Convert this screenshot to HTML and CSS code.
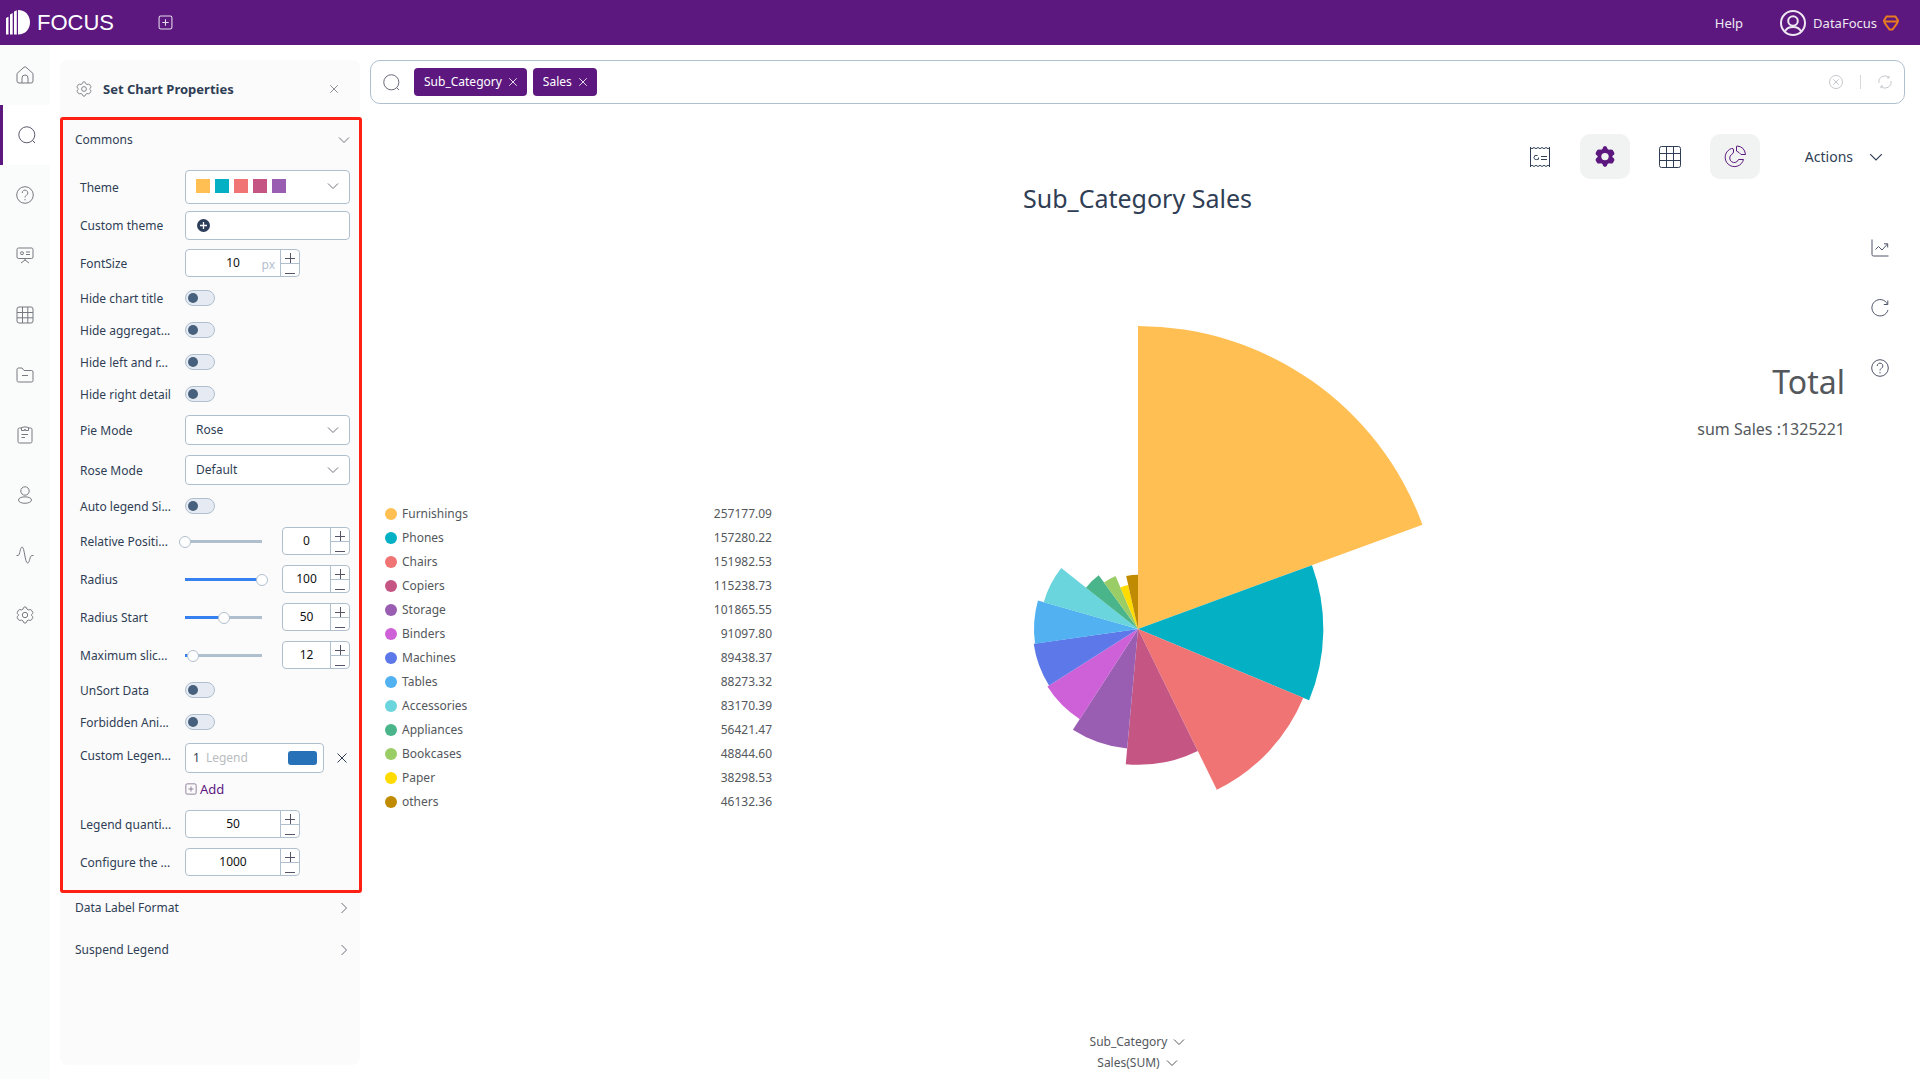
FILE: index.html
```html
<!DOCTYPE html>
<html lang="en">
<head>
<meta charset="utf-8">
<meta name="viewport" content="width=device-width, initial-scale=1">
<title>DataFocus</title>
<link rel="stylesheet" href="styles.css">
</head>
<body>
<svg class="sprite" aria-hidden="true">
  <symbol id="i-down" viewBox="0 0 12 12"><path d="M1 3.500L6 8.500L11 3.500"/></symbol>
  <symbol id="i-right" viewBox="0 0 12 12"><path d="M3.500 1L8.500 6L3.500 11"/></symbol>
  <symbol id="i-x" viewBox="0 0 12 12"><path d="M1.500 1.500L10.500 10.500M10.500 1.500L1.500 10.500"/></symbol>
  <symbol id="i-plus" viewBox="0 0 12 12"><path d="M6.500 2V12M1 7.500H11"/></symbol>
  <symbol id="i-minus" viewBox="0 0 12 12"><path d="M1 9.500H11"/></symbol>
  <symbol id="i-plusbox" viewBox="0 0 14 14"><rect x="1" y="1" width="12" height="12" rx="1.500"/><path d="M7 4V10M4 7H10"/></symbol>
  <symbol id="i-search" viewBox="0 0 18 18"><circle cx="8.800" cy="8.800" r="8"/><path d="M14.500 14.500L17 17"/></symbol>
  <symbol id="i-help" viewBox="0 0 18 18"><circle cx="9" cy="9" r="8.300"/><path d="M6.200 7a2.800 2.800 0 1 1 4.300 2.300C9.500 10 9 10.300 9 11.500M9 13v1.300"/></symbol>
  <symbol id="i-grid" viewBox="0 0 18 18"><rect x="1" y="1" width="16" height="16" rx="2"/><path d="M1 6.500H17M1 11.800H17M6.500 1V17M11.800 1V17"/></symbol>
  <symbol id="i-gear" viewBox="0 0 18 18"><path d="M9 .8q1.500 0 2 2.300l1.300.8q2.400-.8 3.200.3l1.300 2.300q.4 1.100-1.600 2.500 2 1.500 1.600 2.600l-1.300 2.200q-.8 1.100-3.200.3l-1.300.8q-.5 2.300-2 2.300t-2-2.300l-1.300-.8q-2.400.8-3.200-.3l-1.300-2.200Q.8 10.500 2.800 9 .8 7.600 1.200 6.500l1.300-2.300q.8-1.100 3.200-.3L7 3.100Q7.500.8 9 .8z"/><circle cx="9" cy="9" r="2.700"/></symbol>
</svg>

<header class="topbar">
  <a class="brand" href="#">
    <svg width="24" height="25" viewBox="0 0 24 25" aria-hidden="true"><path fill="currentColor" d="M0 8l2.500-1.200V24.500H0zM4 4.500l2.700-1.500V24.500H4zM8 1.500l2.800-1.200V24.500H8zM12 0c7.500 0 12 5.500 12 12.300S19.500 24.500 12 24.500z"/></svg>
    <span>FOCUS</span>
  </a>
  <button class="icon-btn new-tab" aria-label="New"><svg class="ico" width="15" height="15"><use href="#i-plusbox"/></svg></button>
  <nav class="account">
    <a href="#">Help</a>
    <a class="user" href="#">
      <svg class="ico thick" width="26" height="26" viewBox="0 0 26 26" aria-hidden="true"><circle cx="13" cy="13" r="12"/><circle cx="13" cy="11" r="4.800"/><path d="M5 21.500c1.500-3.800 4-4.500 8-4.500s6.500.7 8 4.500"/></svg>
      <span>DataFocus</span>
      <svg class="ico gem" width="16" height="16" viewBox="0 0 16 16" aria-hidden="true"><path d="M3.500 1.500h9L15 5.500c0 3-4 6.500-5.500 9h-3C5 12 1 8.500 1 5.500zM1.500 6.500H14.500"/></svg>
    </a>
  </nav>
</header>

<div class="shell">
  <nav class="rail" aria-label="Sections">
    <a href="#" aria-label="Home"><svg class="ico" width="18" height="18" viewBox="0 0 18 18"><path d="M1 7.500L8 1.200q1-.8 2 0L17 7.500V15q0 2-2 2H3q-2 0-2-2zM6 17V12a3 3 0 0 1 6 0V17"/></svg></a>
    <a class="active" href="#" aria-label="Search"><svg class="ico" width="18" height="18"><use href="#i-search"/></svg></a>
    <a href="#" aria-label="Help"><svg class="ico" width="18" height="18"><use href="#i-help"/></svg></a>
    <a href="#" aria-label="Boards"><svg class="ico" width="18" height="18" viewBox="0 0 18 18"><rect x="1" y="2" width="16" height="10.500" rx="1.500"/><circle cx="6" cy="7.200" r="1.500"/><path d="M10 6H14M10 8.500H14M9 12.500V14M5 17l4-3 4 3"/></svg></a>
    <a href="#" aria-label="Tables"><svg class="ico" width="18" height="18"><use href="#i-grid"/></svg></a>
    <a href="#" aria-label="Files"><svg class="ico" width="18" height="18" viewBox="0 0 18 18"><path d="M1 3.500q0-1.500 1.500-1.500H6l2 2.500h7.500q1.500 0 1.500 1.500v8.500q0 1.500-1.500 1.500h-13Q1 16 1 14.500zM6 9.500H12"/></svg></a>
    <a href="#" aria-label="Tasks"><svg class="ico" width="18" height="18" viewBox="0 0 18 18"><path d="M5.500 2H3.500Q2 2 2 3.500v12Q2 17 3.500 17h11q1.500 0 1.500-1.500v-12Q16 2 14.500 2h-2M5.500 1.500V4.500H8.500L9 3L9.500 4.500H12.500V1.500Q9 .2 5.500 1.500zM5.500 8.500H12M5.500 11.500H9"/></svg></a>
    <a href="#" aria-label="Users"><svg class="ico" width="18" height="18" viewBox="0 0 18 18"><circle cx="9" cy="5" r="4.200"/><path d="M2.500 14C2.500 9.800 15.500 9.800 15.500 14S2.500 18.500 2.500 14z"/></svg></a>
    <a href="#" aria-label="Activity"><svg class="ico" width="18" height="18" viewBox="0 0 18 18"><path d="M.5 9.500H2c2 0 2-8.500 4.200-8.500S9 17 11.500 17s2-7.500 4.500-7.500h1.500"/></svg></a>
    <a href="#" aria-label="Settings"><svg class="ico" width="18" height="18"><use href="#i-gear"/></svg></a>
  </nav>

  <aside class="panel">
    <div class="panel-head">
      <svg class="ico" width="16" height="16"><use href="#i-gear"/></svg>
      <h2>Set Chart Properties</h2>
      <button class="icon-btn" aria-label="Close"><svg class="ico" width="10" height="10"><use href="#i-x"/></svg></button>
    </div>

    <section class="commons">
      <button class="section-head first">Commons<svg class="ico" width="12" height="12"><use href="#i-down"/></svg></button>
      <div class="rows">
        <div class="row tall"><span class="label" id="l-theme">Theme</span>
          <button class="box theme" aria-labelledby="l-theme" aria-haspopup="listbox"><i class="sw c1"></i><i class="sw c2"></i><i class="sw c3"></i><i class="sw c4"></i><i class="sw c5"></i><svg class="ico" width="12" height="12"><use href="#i-down"/></svg></button></div>
        <div class="row custom"><span class="label" id="l-custom">Custom theme</span>
          <button class="box add-theme" aria-labelledby="l-custom"><svg width="13" height="13" viewBox="0 0 13 13"><circle cx="6.500" cy="6.500" r="6.500" fill="#2c3e5a"/><path d="M6.500 3V10M3 6.500H10" stroke="#fff" stroke-width="1.300"/></svg></button></div>
        <div class="row num"><label class="label" for="fs">FontSize</label>
          <div class="stepper wide"><input id="fs" type="number" value="10"><span class="unit">px</span><div class="steps"><button aria-label="Increase"><svg class="ico" width="12" height="12"><use href="#i-plus"/></svg></button><button aria-label="Decrease"><svg class="ico" width="12" height="12"><use href="#i-minus"/></svg></button></div></div></div>
        <div class="row"><label class="label" for="t1">Hide chart title</label><input class="switch" id="t1" type="checkbox" role="switch"></div>
        <div class="row"><label class="label" for="t2">Hide aggregat...</label><input class="switch" id="t2" type="checkbox" role="switch"></div>
        <div class="row"><label class="label" for="t3">Hide left and r...</label><input class="switch" id="t3" type="checkbox" role="switch"></div>
        <div class="row"><label class="label" for="t4">Hide right detail</label><input class="switch" id="t4" type="checkbox" role="switch"></div>
        <div class="row tall"><label class="label" for="pm">Pie Mode</label>
          <div class="select"><select class="box" id="pm"><option>Rose</option></select><svg class="ico" width="12" height="12"><use href="#i-down"/></svg></div></div>
        <div class="row tall"><label class="label" for="rm">Rose Mode</label>
          <div class="select"><select class="box" id="rm"><option>Default</option></select><svg class="ico" width="12" height="12"><use href="#i-down"/></svg></div></div>
        <div class="row"><label class="label" for="t5">Auto legend Si...</label><input class="switch" id="t5" type="checkbox" role="switch"></div>
        <div class="row num"><label class="label" for="n1">Relative Positi...</label><input class="slider" type="range" value="0" aria-label="Relative Positi..." style="--fill:0%">
          <div class="stepper"><input id="n1" type="number" value="0"><div class="steps"><button aria-label="Increase"><svg class="ico" width="12" height="12"><use href="#i-plus"/></svg></button><button aria-label="Decrease"><svg class="ico" width="12" height="12"><use href="#i-minus"/></svg></button></div></div></div>
        <div class="row num"><label class="label" for="n2">Radius</label><input class="slider" type="range" value="100" aria-label="Radius" style="--fill:100%">
          <div class="stepper"><input id="n2" type="number" value="100"><div class="steps"><button aria-label="Increase"><svg class="ico" width="12" height="12"><use href="#i-plus"/></svg></button><button aria-label="Decrease"><svg class="ico" width="12" height="12"><use href="#i-minus"/></svg></button></div></div></div>
        <div class="row num"><label class="label" for="n3">Radius Start</label><input class="slider" type="range" value="50" aria-label="Radius Start" style="--fill:50%">
          <div class="stepper"><input id="n3" type="number" value="50"><div class="steps"><button aria-label="Increase"><svg class="ico" width="12" height="12"><use href="#i-plus"/></svg></button><button aria-label="Decrease"><svg class="ico" width="12" height="12"><use href="#i-minus"/></svg></button></div></div></div>
        <div class="row num"><label class="label" for="n4">Maximum slic...</label><input class="slider" type="range" min="2" value="12" aria-label="Maximum slic..." style="--fill:10%">
          <div class="stepper"><input id="n4" type="number" value="12"><div class="steps"><button aria-label="Increase"><svg class="ico" width="12" height="12"><use href="#i-plus"/></svg></button><button aria-label="Decrease"><svg class="ico" width="12" height="12"><use href="#i-minus"/></svg></button></div></div></div>
        <div class="row"><label class="label" for="t6">UnSort Data</label><input class="switch" id="t6" type="checkbox" role="switch"></div>
        <div class="row"><label class="label" for="t7">Forbidden Ani...</label><input class="switch" id="t7" type="checkbox" role="switch"></div>
        <div class="row tall legend-row"><label class="label" for="lg">Custom Legen...</label>
          <div class="box legend-edit"><span>1</span><input id="lg" type="text" placeholder="Legend"><button class="color" aria-label="Color"></button></div>
          <button class="icon-btn remove" aria-label="Remove"><svg class="ico" width="12" height="12"><use href="#i-x"/></svg></button></div>
        <div class="row add"><span class="label"></span><button class="add-btn"><svg class="ico" width="12" height="12"><use href="#i-plusbox"/></svg>Add</button></div>
        <div class="row num"><label class="label" for="n5">Legend quanti...</label>
          <div class="stepper wide"><input id="n5" type="number" value="50"><div class="steps"><button aria-label="Increase"><svg class="ico" width="12" height="12"><use href="#i-plus"/></svg></button><button aria-label="Decrease"><svg class="ico" width="12" height="12"><use href="#i-minus"/></svg></button></div></div></div>
        <div class="row num"><label class="label" for="n6">Configure the ...</label>
          <div class="stepper wide"><input id="n6" type="number" value="1000"><div class="steps"><button aria-label="Increase"><svg class="ico" width="12" height="12"><use href="#i-plus"/></svg></button><button aria-label="Decrease"><svg class="ico" width="12" height="12"><use href="#i-minus"/></svg></button></div></div></div>
      </div>
    </section>
    <div class="more">
      <button class="section-head">Data Label Format<svg class="ico" width="12" height="12"><use href="#i-right"/></svg></button>
      <button class="section-head">Suspend Legend<svg class="ico" width="12" height="12"><use href="#i-right"/></svg></button>
    </div>
  </aside>

  <main class="main">
    <div class="search">
      <svg class="ico" width="17" height="17"><use href="#i-search"/></svg>
      <div class="tags">
        <span class="tag">Sub_Category<button class="icon-btn" aria-label="Remove Sub_Category"><svg class="ico" width="10" height="10"><use href="#i-x"/></svg></button></span>
        <span class="tag">Sales<button class="icon-btn" aria-label="Remove Sales"><svg class="ico" width="10" height="10"><use href="#i-x"/></svg></button></span>
      </div>
      <input class="query" type="text" aria-label="Search">
      <div class="search-end">
        <button class="icon-btn" aria-label="Clear"><svg class="ico" width="14" height="14" viewBox="0 0 14 14"><circle cx="7" cy="7" r="6.500"/><path d="M4.300 4.300L9.700 9.700M9.700 4.300L4.300 9.700"/></svg></button>
        <span class="divider"></span>
        <button class="icon-btn" aria-label="Refresh"><svg class="ico" width="14" height="14" viewBox="0 0 14 14"><path d="M1 8A6 6 0 0 1 11 2.500M13 6A6 6 0 0 1 3 11.500M11 .8V3H9M3 13.200V11H5"/></svg></button>
      </div>
    </div>

    <div class="toolbar">
      <button class="tool" aria-label="Query"><svg class="ico" width="22" height="22" viewBox="0 0 22 22"><path d="M1.500 1V21M20.500 1V21M1 1.500l2 1.200 2-1.200 2 1.200 2-1.200 2 1.200 2-1.200 2 1.200 2-1.200 2 1.200 2-1.200M1 20.500l2-1.200 2 1.200 2-1.200 2 1.200 2-1.200 2 1.200 2-1.200 2 1.200 2-1.200 2 1.200M8.500 9.500Q5 8.500 5 11.500T9.500 13.200V11.500M12 10.500H18M12 13.500H18"/></svg></button>
      <button class="tool on" aria-label="Chart properties"><svg width="20" height="21" viewBox="0 0 20 21"><path fill="#5c187f" fill-rule="evenodd" d="M10 0q2 0 2.600 3l1.300.8q3-1 4 .5l1.500 2.600q.5 1.200-2 3.200v1q2.500 2 2 3.200l-1.500 2.600q-1 1.200-4 .3l-1.300.8Q12 21 10 21t-2.600-3l-1.300-.8q-3 .9-4-.3L.6 14.300q-.5-1.200 2-3.200v-1q-2.500-2-2-3.200l1.500-2.600q1-1.500 4-.5L7.400 3Q8 0 10 0zM10 6.900a3.700 3.700 0 1 0 0 7.400 3.700 3.700 0 0 0 0-7.400z"/></svg></button>
      <button class="tool" aria-label="Table"><svg class="ico" width="22" height="22" viewBox="0 0 22 22"><rect x=".5" y=".5" width="21" height="21" rx="2"/><path d="M.5 7.500H21.500M.5 14.500H21.500M7.500 .5V21.500M14.500 .5V21.500"/></svg></button>
      <button class="tool on" aria-label="Chart"><svg class="ico pie-ico" width="23" height="23" viewBox="0 0 23 23"><path d="M8.500 3.500A9.300 9.300 0 1 0 20.500 14.500H15.500A4.500 4.500 0 1 1 8.500 9.500Q10.500 8.500 10.500 7V5Q10.500 3 8.500 3.500zM14 1Q21.500 1.500 22.500 9.500L18 9.500Q16.500 7.500 13.500 6V1.500Q13.500 1 14 1z"/></svg></button>
      <button class="actions">Actions<svg class="ico" width="14" height="14"><use href="#i-down"/></svg></button>
    </div>

    <h1>Sub_Category Sales</h1>
    <div class="stage">
      <table class="legend" aria-label="Sales by Sub_Category"><tbody id="legend"></tbody></table>
      <svg id="rose" class="rose" viewBox="-304 -304 608 608" role="img" aria-label="Sub_Category Sales"></svg>
      <div class="side">
        <div class="totals"><strong>Total</strong><span>sum Sales :1325221</span></div>
        <div class="side-tools">
          <button class="icon-btn" aria-label="Trend"><svg class="ico" width="18" height="18" viewBox="0 0 18 18"><path d="M1 .5V15.500Q1 17 2.500 17H17.500M4.500 10.500L7.500 7.500L11 11L16.500 5M13 4.800H16.700V8.500"/></svg></button>
          <button class="icon-btn" aria-label="Reload"><svg class="ico" width="18" height="18" viewBox="0 0 18 18"><path d="M16.500 5.200A8.200 8.200 0 1 0 17 11M16.800 1.500V5.500H12.800"/></svg></button>
          <button class="icon-btn" aria-label="Help"><svg class="ico" width="18" height="18"><use href="#i-help"/></svg></button>
        </div>
      </div>
    </div>
    <div class="axes">
      <button>Sub_Category<svg class="ico" width="12" height="12"><use href="#i-down"/></svg></button>
      <button>Sales(SUM)<svg class="ico" width="12" height="12"><use href="#i-down"/></svg></button>
    </div>
  </main>
</div>
<script src="chart.js"></script>
</body>
</html>
```
FILE: styles.css
```css
* { box-sizing: border-box; }
body {
  margin: 0;
  min-height: 100vh;
  display: flex;
  flex-direction: column;
  background: #fff;
  color: #2f3e55;
  font: 12px/18px "Noto Sans", "Open Sans", sans-serif;
}
button, input, select { font: inherit; color: inherit; margin: 0; }
button { padding: 0; border: 0; background: none; cursor: pointer; }
a { color: inherit; text-decoration: none; }
.sprite { position: absolute; width: 0; height: 0; }
.ico { fill: none; stroke: currentColor; stroke-width: 1; flex: none; display: block; }
.thick { stroke-width: 2; }
.icon-btn { display: flex; align-items: center; justify-content: center; }

/* top bar */
.topbar { display: flex; align-items: center; height: 45px; padding: 0 21px 0 6px; background: #5c187f; color: #fff; }
.brand { display: flex; align-items: center; gap: 7px; font: 22px/25px "Liberation Sans", Arial, sans-serif; }
.new-tab { margin-left: 44px; color: #e6dbec; }
.account { display: flex; align-items: center; gap: 37px; margin-left: auto; font-size: 13px; color: #efe8f2; }
.user { display: flex; align-items: center; gap: 6px; }
.user span { margin-left: 1px; }
.gem { color: #e87b22; stroke-width: 2; }

.shell { display: flex; flex: 1; }

/* left rail */
.rail { width: 50px; flex: none; background: #fafcfb; color: #777a80; }
.rail a { display: flex; align-items: center; justify-content: center; height: 60px; }
.rail .active { background: #fff; border-left: 3px solid #5c187f; color: #5e5670; }

/* property panel */
.panel { width: 300px; flex: none; margin: 15px 10px 14px; border-radius: 8px; background: #fbfbfb; }
.panel-head { display: flex; align-items: center; height: 57px; padding: 0 21px 0 16px; color: #777a80; }
.panel-head h2 { flex: 1; margin: 0 0 0 11px; font-size: 13px; color: #2f3e55; }
.commons { margin-right: -2px; border: 3px solid #fe2012; border-radius: 3px; }
.section-head { display: flex; align-items: center; justify-content: space-between; width: 100%; height: 30px; padding: 0 10px 0 15px; }
.section-head .ico { color: #6f7280; }
.section-head.first { height: 40px; padding: 0 9px 0 12px; }
.more { display: grid; gap: 12px; }
.rows { padding: 7px 9px 9px 17px; }
.row { display: flex; align-items: center; height: 32px; }
.row.tall { height: 40px; }
.row.custom { height: 37px; }
.row.num { height: 38px; }
.row.add { height: 27px; padding-bottom: 5px; }
.label { width: 95px; margin-right: 10px; padding-top: 1px; flex: none; white-space: nowrap; }
.legend-row .label { padding: 0 0 5px; }
.box { border: 1px solid #b0bfce; border-radius: 4px; background: #fff; }
.theme { display: flex; align-items: center; flex: 1; gap: 5px; height: 34px; padding: 0 10px 2px; }
.theme .ico { margin-left: auto; }
.sw { width: 14px; height: 14px; }
.c1 { background: #ffbf53; }
.c2 { background: #04b0c3; }
.c3 { background: #f07474; }
.c4 { background: #c55583; }
.c5 { background: #995eb2; }
.add-theme { display: flex; align-items: center; flex: 1; height: 29px; padding: 0 11px; }
.select { position: relative; flex: 1; }
.select select { display: block; width: 100%; height: 30px; padding: 0 10px; appearance: none; outline: 0; }
.select .ico { position: absolute; right: 11px; top: 9px; pointer-events: none; }
.select .ico, .theme .ico { color: #6f7280; }

.switch { appearance: none; display: flex; align-items: center; width: 30px; height: 16px; padding: 0 2px; border: 1px solid #b0bfce; border-radius: 8px; background: #e6ebf3; }
.switch::before { content: ""; width: 10px; height: 10px; border-radius: 5px; background: #47607d; }
.switch:checked { justify-content: flex-end; }

.stepper { position: relative; display: flex; width: 68px; height: 28px; margin-left: auto; border: 1px solid #b0bfce; border-radius: 4px; background: #fff; }
.stepper.wide { width: 115px; margin-left: 0; }
.stepper input { flex: 1; min-width: 0; padding: 0; border: 0; background: none; text-align: center; color: #111; appearance: textfield; outline: 0; }
.stepper input::-webkit-inner-spin-button { display: none; }
.unit { position: absolute; right: 24px; top: 6px; color: #b4c0cf; }
.steps { display: grid; grid-template-rows: 1fr 1fr; width: 19px; border-left: 1px solid #b0bfce; }
.steps button { display: flex; align-items: center; justify-content: center; overflow: hidden; color: #555566; }
.steps button + button { border-top: 1px solid #b0bfce; }

.slider { width: 89px; height: 12px; margin: 0 -6px; appearance: none; background: none; outline: 0; }
.slider::-webkit-slider-runnable-track { height: 3px; background: linear-gradient(to right, #3680f0 var(--fill), #b0bfce 0) 6px 0 / 77px 3px no-repeat; }
.slider::-webkit-slider-thumb { appearance: none; width: 12px; height: 12px; margin-top: -4px; border: 1px solid #b0bfce; border-radius: 6px; background: #fff; }

.legend-edit { display: flex; align-items: center; gap: 6px; width: 139px; height: 30px; padding: 0 6px 0 7px; }
.legend-edit input { flex: 1; min-width: 0; padding: 0; border: 0; outline: 0; }
.legend-edit input::placeholder { color: #b9bcc0; }
.color { width: 29px; height: 14px; border-radius: 3px; background: #2771b8; }
.remove { margin-left: 12px; }
.add-btn { display: flex; align-items: center; gap: 3px; color: #5c187f; font-size: 13px; }
.add-btn .ico { color: #85708f; }

/* main column */
.main { display: flex; flex-direction: column; flex: 1; min-width: 0; padding: 15px 15px 6px 0; }
.search { display: flex; align-items: center; height: 44px; padding: 0 12px; border: 1px solid #b0bfce; border-radius: 10px; color: #5e6070; }
.tags { display: flex; gap: 6px; margin-left: 14px; }
.tag { display: flex; align-items: center; gap: 6px; height: 28px; padding: 0 9px 0 10px; border-radius: 4px; background: #5c187f; color: #fff; }
.query { flex: 1; min-width: 0; border: 0; outline: 0; }
.search-end { display: flex; align-items: center; gap: 17px; color: #c4c7ca; }
.divider { width: 1px; height: 14px; background: #d5d8da; }
.toolbar { display: flex; justify-content: flex-end; gap: 15px; margin-top: 30px; padding-right: 22px; }
.tool { display: flex; align-items: center; justify-content: center; width: 50px; height: 45px; border-radius: 10px; }
.tool.on { background: #f1f3f2; }
.pie-ico { color: #5c187f; }
.actions { display: flex; align-items: center; gap: 16px; margin-left: 30px; font-size: 14px; }
h1 { margin: 0 0 2px; padding-top: 1px; font-size: 25px; font-weight: 400; line-height: 36px; text-align: center; }

.stage { display: grid; grid-template-columns: 1fr 608px 1fr; flex: 1; align-items: center; color: #54585c; }
.legend { width: 387px; margin: 67px 0 0 15px; border-collapse: collapse; }
.legend th, .legend td { height: 24px; padding: 0; font-weight: 400; }
.legend th { text-align: left; }
.legend td { text-align: right; }
.legend th span { display: flex; align-items: center; gap: 5px; }
.dot { width: 12px; height: 12px; border-radius: 6px; }
.rose { display: block; width: 100%; margin-top: 8px; }
.side { display: flex; align-self: start; justify-content: flex-end; gap: 10px; }
.totals { display: grid; gap: 13px; padding-top: 142px; text-align: right; font-size: 16px; line-height: 24px; }
.totals strong { font-size: 32px; font-weight: 400; line-height: 44px; }
.side-tools { width: 50px; color: #4f5468; }
.side-tools button { width: 50px; height: 60px; }
.axes { display: grid; justify-items: center; color: #54585c; }
.axes button { display: flex; align-items: center; gap: 6px; height: 21px; }
```
FILE: chart.js
```js
const data = [
  ["Furnishings", "257177.09", "#ffbf53"],
  ["Phones", "157280.22", "#04b0c3"],
  ["Chairs", "151982.53", "#f07474"],
  ["Copiers", "115238.73", "#c55583"],
  ["Storage", "101865.55", "#995eb2"],
  ["Binders", "91097.80", "#cf61d8"],
  ["Machines", "89438.37", "#5d78e8"],
  ["Tables", "88273.32", "#52b1f0"],
  ["Accessories", "83170.39", "#6ad5dc"],
  ["Appliances", "56421.47", "#4ab58a"],
  ["Bookcases", "48844.60", "#9bcd67"],
  ["Paper", "38298.53", "#ffdb00"],
  ["others", "46132.36", "#c08b00"]
];
const total = data.reduce((sum, d) => sum + Number(d[1]), 0);
const max = Number(data[0][1]);
const outer = 303;
const legend = document.getElementById("legend");
const rose = document.getElementById("rose");
let angle = 0;
for (const [name, value, color] of data) {
  legend.insertAdjacentHTML("beforeend",
    `<tr><th scope="row"><span><i class="dot" style="background:${color}"></i>${name}</span></th><td>${value}</td></tr>`);
  // slice angle and radius both grow with the value
  const r = outer * value / max;
  const end = angle + value / total * 2 * Math.PI;
  const point = a => `${r * Math.sin(a)} ${-r * Math.cos(a)}`;
  const path = document.createElementNS("http://www.w3.org/2000/svg", "path");
  path.setAttribute("d", `M0 0L${point(angle)}A${r} ${r} 0 0 1 ${point(end)}Z`);
  path.setAttribute("fill", color);
  rose.append(path);
  angle = end;
}
```
